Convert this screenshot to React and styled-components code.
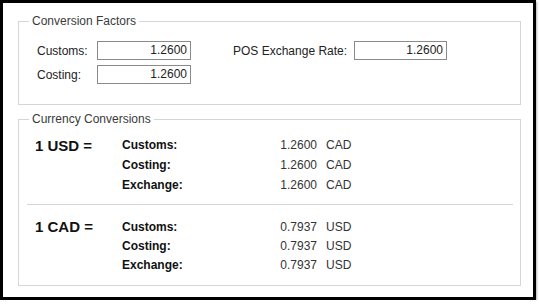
import React from "react";
import styled, { createGlobalStyle } from "styled-components";

const GlobalStyle = createGlobalStyle`
  html, body {
    margin: 0;
    padding: 0;
    background: #fff;
  }
  body {
    font-family: "Liberation Sans", Arial, sans-serif;
    font-size: 12px;
    color: #1e1e1e;
  }
`;

const Window = styled.div`
  box-sizing: border-box;
  width: 536px;
  height: 300px;
  border: 3px solid #000;
  box-shadow: 1px 2px 2px rgba(0, 0, 0, 0.3);
  background: #fff;
  padding: 11px 12px 0 15px;
  display: flex;
  flex-direction: column;
  gap: 7px;
`;

const Group = styled.fieldset`
  box-sizing: border-box;
  margin: 0;
  padding: 0;
  border: 1px solid #d5d5d5;
  height: ${(p) => p.$height}px;
  min-width: 0;
`;

const Legend = styled.legend`
  margin-left: 10px;
  padding: 0 3px;
  font-size: 12px;
  line-height: 14px;
  color: #3a3a3a;
`;

const FactorGrid = styled.div`
  display: grid;
  grid-template-columns: 60px 94px 42px 121px 93px;
  grid-auto-rows: 19px;
  row-gap: 5px;
  padding: 13px 0 0 18px;
  align-items: center;
`;

const FieldLabel = styled.label`
  font-size: 12px;
  color: #222;
  white-space: nowrap;
`;

const NumberBox = styled.input`
  box-sizing: border-box;
  width: 100%;
  height: 19px;
  margin: 0;
  padding: 0 3px 1px 2px;
  border: 1px solid #8a8a8a;
  border-radius: 0;
  font-family: "Liberation Sans", Arial, sans-serif;
  font-size: 12px;
  color: #222;
  text-align: right;
  background: #fff;
  outline: none;
`;

const Conversions = styled.div`
  padding: 9px 7px 0 16px;
  display: flex;
  flex-direction: column;
`;

const RateBlock = styled.div`
  display: grid;
  grid-template-columns: 87px 148px 47px auto;
  grid-auto-rows: ${(p) => p.$row}px;
  align-items: center;
  margin-top: ${(p) => p.$top || 0}px;
`;

const Base = styled.div`
  grid-row: 1;
  grid-column: 1;
  font-size: 15px;
  font-weight: bold;
  color: #111;
  white-space: nowrap;
`;

const RateName = styled.div`
  grid-column: 2;
  font-size: 12px;
  font-weight: bold;
  color: #111;
`;

const RateValue = styled.div`
  grid-column: 3;
  text-align: right;
  font-size: 12px;
  color: #333;
`;

const RateCurrency = styled.div`
  grid-column: 4;
  padding-left: 9px;
  font-size: 12px;
  color: #333;
`;

const Divider = styled.hr`
  margin: 9px 0 0 -8px;
  border: none;
  border-top: 1px solid #d5d5d5;
  height: 0;
`;

const rates = [
  { base: "1 USD =", target: "CAD", value: "1.2600", row: 20, top: 0 },
  { base: "1 CAD =", target: "USD", value: "0.7937", row: 19, top: 12 },
];

const kinds = ["Customs:", "Costing:", "Exchange:"];

export default function App() {
  return (
    <>
      <GlobalStyle />
      <Window>
        <Group $height={91}>
          <Legend>Conversion Factors</Legend>
          <FactorGrid>
            <FieldLabel>Customs:</FieldLabel>
            <NumberBox defaultValue="1.2600" />
            <span />
            <FieldLabel>POS Exchange Rate:</FieldLabel>
            <NumberBox defaultValue="1.2600" />
            <FieldLabel>Costing:</FieldLabel>
            <NumberBox defaultValue="1.2600" />
          </FactorGrid>
        </Group>
        <Group $height={174}>
          <Legend>Currency Conversions</Legend>
          <Conversions>
            {rates.map((r, i) => (
              <React.Fragment key={r.base}>
                {i > 0 && <Divider />}
                <RateBlock $row={r.row} $top={r.top}>
                  <Base>{r.base}</Base>
                  {kinds.map((k, j) => (
                    <React.Fragment key={k}>
                      <RateName style={{ gridRow: j + 1 }}>{k}</RateName>
                      <RateValue style={{ gridRow: j + 1 }}>{r.value}</RateValue>
                      <RateCurrency style={{ gridRow: j + 1 }}>{r.target}</RateCurrency>
                    </React.Fragment>
                  ))}
                </RateBlock>
              </React.Fragment>
            ))}
          </Conversions>
        </Group>
      </Window>
    </>
  );
}
